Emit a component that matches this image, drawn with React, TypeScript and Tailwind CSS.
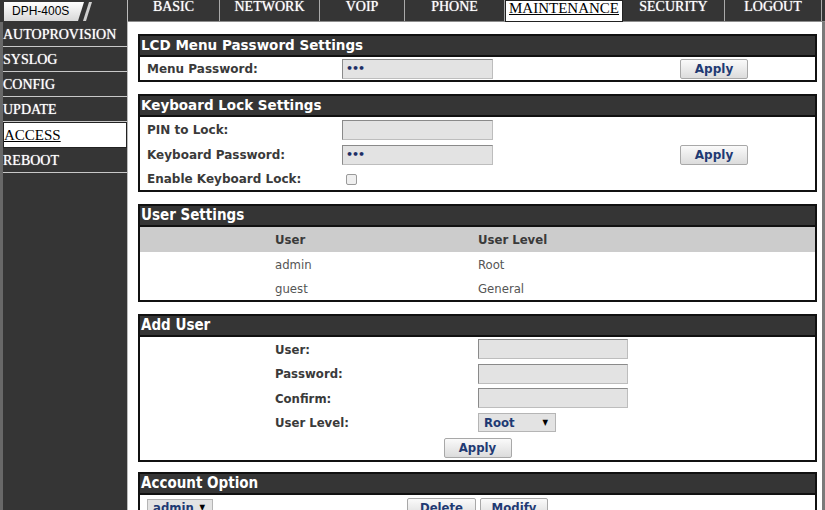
const tabs = [
  { label: 'BASIC', w: 'w-[92px]' },
  { label: 'NETWORK', w: 'w-[100px]' },
  { label: 'VOIP', w: 'w-[85px]' },
  { label: 'PHONE', w: 'w-[100px]' },
  { label: 'MAINTENANCE', w: 'w-[118px]', active: true },
  { label: 'SECURITY', w: 'w-[102px]' },
  { label: 'LOGOUT', w: 'w-[97px]' },
];

const menu = ['AUTOPROVISION', 'SYSLOG', 'CONFIG', 'UPDATE', 'ACCESS', 'REBOOT'];

const cond = "font-['DejaVu_Sans_Condensed','DejaVu_Sans',sans-serif] font-stretch-condensed";
const verd = "font-['DejaVu_Sans','Verdana',sans-serif]";

function Panel({ title, condensed, className = '', children }: { title: string; condensed?: boolean; className?: string; children: React.ReactNode }) {
  return (
    <div className={`border-2 border-[#111] bg-white ${className}`}>
      <div
        className={`h-[21px] bg-[#353535] border-b-2 border-[#111] flex items-center pl-px text-white font-bold ${
          condensed ? `${cond} text-[15px]` : `${verd} text-[13.5px]`
        }`}
      >
        {title}
      </div>
      {children}
    </div>
  );
}

function TextBox({ dots, w = 'w-[151px]' }: { dots?: boolean; w?: string }) {
  return (
    <div className={`${w} h-[20px] bg-[#e3e3e3] border border-[#bdbdbd] border-t-[#8a8a8a] border-l-[#8a8a8a] flex items-center pl-[3px] text-[#1e2f66] text-[11px] tracking-[-1px] leading-none`}>
      {dots ? '•••' : ''}
    </div>
  );
}

function Btn({ label, small }: { label: string; small?: boolean }) {
  return (
    <div
      className={`h-[20px] px-2 flex items-center justify-center rounded-[2px] border border-[#a8a8a8] bg-gradient-to-b from-[#fafafa] to-[#dcdcdc] text-[#1f3a73] font-bold ${
        small ? `${verd} text-[12px] w-[68px]` : `${cond} text-[13px]`
      }`}
    >
      {label}
    </div>
  );
}

function Select({ value, w }: { value: string; w: string }) {
  return (
    <div className={`${w} h-[19px] bg-[#e3e3e3] border border-[#b5b5b5] flex items-center justify-between pl-[5px] pr-[7px] text-[#1f3a73] font-bold text-[13px] ${cond}`}>
      <span>{value}</span>
      <span className="text-[8px] text-black">▼</span>
    </div>
  );
}

export default function App() {
  return (
    <div className="w-[825px] h-[510px] overflow-hidden bg-white flex">
      {/* left column */}
      <div className="w-[127px] flex flex-col bg-[#353535] shrink-0">
        <div className="h-[22px] flex items-center pl-1">
          <div className="relative h-[19px] w-[90px]">
            <svg width="90" height="19" className="absolute inset-0">
              <defs>
                <linearGradient id="lg" x1="0" y1="0" x2="0" y2="1">
                  <stop offset="0" stopColor="#ffffff" />
                  <stop offset="1" stopColor="#d8d8d8" />
                </linearGradient>
              </defs>
              <polygon points="0,0 80,0 74,19 0,19" fill="url(#lg)" />
              <polygon points="85,0 88,0 82,19 79,19" fill="#d0d0d0" />
            </svg>
            <span className="absolute left-[8px] top-[2px] text-[12px] leading-[15px] text-black font-['Liberation_Sans',Arial,sans-serif]">
              DPH-400S
            </span>
          </div>
        </div>
        <div className="flex-1 border-l-[3px] border-[#686868] font-['Liberation_Serif','Times_New_Roman',serif]">
          {menu.map((m) =>
            m === 'ACCESS' ? (
              <div key={m} className="h-[26px] bg-white border border-[#222] flex items-center text-black text-[15px] underline">
                {m}
              </div>
            ) : (
              <div key={m} className="h-[25px] border-b border-[#c8c8c8] flex items-center text-white text-[14px] [text-shadow:0_0_1px_#ddd]">
                {m}
              </div>
            )
          )}
        </div>
      </div>

      {/* right column */}
      <div className="flex-1 flex flex-col border-l border-[#bbb]">
        <div className="h-[22px] bg-[#353535] border-b border-[#8c8c8c] flex font-['Liberation_Serif','Times_New_Roman',serif] shrink-0">
          {tabs.map((t) =>
            t.active ? (
              <div key={t.label} className={`${t.w} h-[22px] bg-white border border-[#222] flex items-start justify-center text-black text-[15px] leading-[15px] underline`}>
                {t.label}
              </div>
            ) : (
              <div key={t.label} className={`${t.w} h-[21px] border-r border-[#aaa] flex items-start justify-center text-white text-[14px] leading-[14px] [text-shadow:0_0_1px_#ddd]`}>
                {t.label}
              </div>
            )
          )}
        </div>

        <div className="flex-1 flex">
          <div className="flex-1 pt-3 pl-[10px] pr-[5px] flex flex-col">
            <Panel title="LCD Menu Password Settings">
              <div className={`h-[23px] flex items-center text-[12px] font-bold text-[#3a3a3a] ${verd}`}>
                <div className="w-[202px] pl-[7px]">Menu Password:</div>
                <TextBox dots />
                <div className="w-[187px]" />
                <Btn label="Apply" small />
              </div>
            </Panel>

            <Panel title="Keyboard Lock Settings" className="mt-3">
              <div className={`text-[12px] font-bold text-[#3a3a3a] ${verd}`}>
                <div className="h-[25px] flex items-center">
                  <div className="w-[202px] pl-[7px]">PIN to Lock:</div>
                  <TextBox />
                </div>
                <div className="h-[25px] flex items-center">
                  <div className="w-[202px] pl-[7px]">Keyboard Password:</div>
                  <TextBox dots />
                  <div className="w-[187px]" />
                  <Btn label="Apply" small />
                </div>
                <div className="h-[23px] flex items-center">
                  <div className="w-[206px] pl-[7px]">Enable Keyboard Lock:</div>
                  <div className="w-[11px] h-[11px] rounded-[2px] border border-[#9a9a9a] bg-[#efefef] mt-[2px]" />
                </div>
              </div>
            </Panel>

            <Panel title="User Settings" condensed className="mt-3">
              <div className={`text-[13px] ${cond}`}>
                <div className="h-[25px] bg-[#cccccc] grid grid-cols-[135px_203px_1fr] items-center font-bold text-[#3a3a3a]">
                  <div />
                  <div>User</div>
                  <div>User Level</div>
                </div>
                <div className="h-[25px] grid grid-cols-[135px_203px_1fr] items-center text-[#555]">
                  <div />
                  <div>admin</div>
                  <div>Root</div>
                </div>
                <div className="h-[23px] grid grid-cols-[135px_203px_1fr] items-center text-[#555]">
                  <div />
                  <div>guest</div>
                  <div>General</div>
                </div>
              </div>
            </Panel>

            <Panel title="Add User" condensed className="mt-3">
              <div className={`text-[13px] font-bold text-[#3a3a3a] ${cond}`}>
                {['User:', 'Password:', 'Confirm:'].map((l) => (
                  <div key={l} className="h-[24.5px] grid grid-cols-[135px_203px_1fr] items-center">
                    <div />
                    <div>{l}</div>
                    <TextBox w="w-[150px]" />
                  </div>
                ))}
                <div className="h-[24.5px] grid grid-cols-[135px_203px_1fr] items-center">
                  <div />
                  <div>User Level:</div>
                  <Select value="Root" w="w-[78px]" />
                </div>
                <div className="h-[25px] flex items-center justify-center">
                  <div className="w-[68px]">
                    <Btn label="Apply" />
                  </div>
                </div>
              </div>
            </Panel>

            <Panel title="Account Option" condensed className="mt-[10px]">
              <div className="h-[26px] grid grid-cols-[1fr_auto_1fr] items-center pl-[7px]">
                <Select value="admin" w="w-[66px]" />
                <div className="flex gap-1 -ml-[7px]">
                  <div className="w-[69px]">
                    <Btn label="Delete" />
                  </div>
                  <div className="w-[68px]">
                    <Btn label="Modify" />
                  </div>
                </div>
                <div />
              </div>
            </Panel>
          </div>
          <div className="w-[3px] bg-[#7a7a7a]" />
        </div>
      </div>
    </div>
  );
}
